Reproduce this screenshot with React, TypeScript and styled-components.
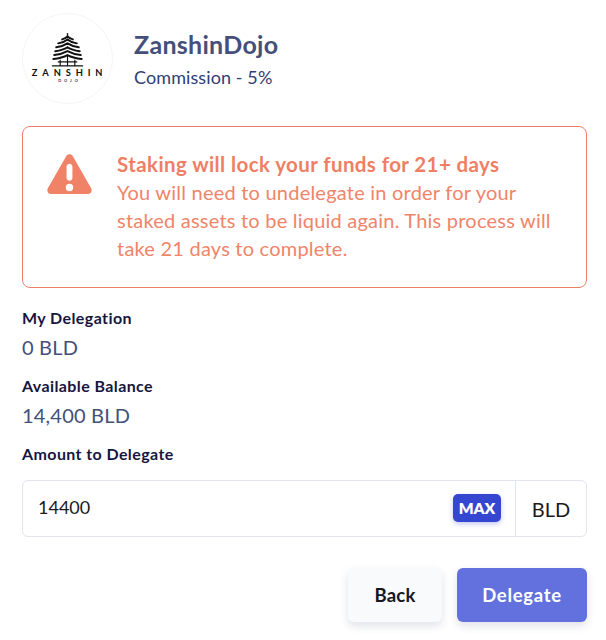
import React from "react";
import styled, { createGlobalStyle } from "styled-components";

const GlobalStyle = createGlobalStyle`
  body {
    margin: 0;
    background: #fff;
    font-family: "Lato", "Noto Sans", sans-serif;
  }
`;

const Page = styled.div`
  width: 606px;
  height: 640px;
  box-sizing: border-box;
  padding: 13px 19px 0 22px;
  overflow: hidden;
`;

const Header = styled.header`
  display: flex;
  align-items: center;
  gap: 21px;
  margin-bottom: 22px;
`;

const LogoCircle = styled.div`
  width: 91px;
  height: 91px;
  border-radius: 50%;
  border: 1px solid #f5f5f6;
  box-sizing: border-box;
  display: flex;
  align-items: center;
  justify-content: center;
`;

const TitleContainer = styled.div`
  display: flex;
  flex-direction: column;
  gap: 7px;
`;

const Title = styled.span`
  font-size: 25px;
  line-height: 30px;
  font-weight: 700;
  letter-spacing: 0.3px;
  color: #44507a;
`;

const Commission = styled.span`
  font-size: 18px;
  line-height: 22px;
  letter-spacing: 0.1px;
  color: #2f4073;
`;

const Alert = styled.section`
  display: flex;
  box-sizing: border-box;
  height: 162px;
  border: 1px solid #ee8068;
  border-radius: 8px;
  padding: 23px 20px 0 24px;
  gap: 25px;
  margin-bottom: 20px;
`;

const AlertIcon = styled.svg`
  width: 45px;
  height: 40px;
  margin-top: 4px;
  flex: none;
`;

const AlertBody = styled.div`
  color: #f08469;
  font-size: 20px;
  line-height: 28px;
  letter-spacing: 0.22px;
  font-weight: 400;
`;

const AlertTitle = styled.div`
  font-size: 20.5px;
  letter-spacing: 0.4px;
  font-weight: 700;
  color: #ef7f64;
`;

const Label = styled.div`
  font-size: 16px;
  line-height: 20px;
  letter-spacing: 0.4px;
  font-weight: 700;
  color: #16163f;
`;

const Value = styled.div`
  font-size: 20px;
  line-height: 24px;
  letter-spacing: 0.2px;
  color: #44507a;
  margin: 7px 0 17px;
`;

const InputGroup = styled.div`
  display: flex;
  height: 57px;
  box-sizing: border-box;
  margin-top: 16px;
  border: 1px solid #e2e4ee;
  border-radius: 6px;
`;

const InputField = styled.div`
  flex: 1;
  display: flex;
  align-items: center;
  justify-content: space-between;
  padding: 0 14px 1px 15px;
  font-size: 18px;
  line-height: 22px;
  color: #1a1a1a;
`;

const AmountText = styled.span`
  margin-bottom: 2px;
`;

const MaxButton = styled.button`
  width: 48px;
  height: 28px;
  padding: 0;
  border: none;
  border-radius: 5px;
  background: #3547d1;
  color: #fff;
  font: 800 15.5px "Lato", sans-serif;
  box-shadow: 0 2px 5px rgba(53, 71, 209, 0.3);
`;

const Unit = styled.div`
  width: 70px;
  border-left: 1px solid #e2e4ee;
  display: flex;
  align-items: center;
  justify-content: center;
  font-size: 20px;
  color: #1a1a1a;
`;

const Actions = styled.div`
  display: flex;
  justify-content: flex-end;
  gap: 15px;
  margin-top: 31px;
`;

const Button = styled.button<{ $primary?: boolean }>`
  height: 54px;
  width: ${({ $primary }) => ($primary ? "130px" : "94px")};
  border: none;
  border-radius: 6px;
  font: 700 18.5px "Lato", sans-serif;
  letter-spacing: ${({ $primary }) => ($primary ? "0.7px" : "0.2px")};
  background: ${({ $primary }) => ($primary ? "#6271dd" : "#f9fafc")};
  color: ${({ $primary }) => ($primary ? "#fff" : "#16161d")};
  box-shadow: 0 4px 8px rgba(40, 50, 90, 0.14);
`;

const Logo = () => (
  <svg width="91" height="91" viewBox="0 0 91 91">
    <g fill="none" stroke="#111" strokeLinecap="round">
      <path d="M45.5 20v3" strokeWidth="1.3" />
      <path d="M40 26q3.500-1 5.500-3q2 2 5.500 3" strokeWidth="2" />
      <path d="M36 30q6-1 9.500-4q3.500 3 9.500 4" strokeWidth="2" />
      <path d="M34 34q7-1 11.500-4q4.500 3 11.500 4" strokeWidth="2" />
      <path d="M33 38q8-1 12.500-4q4.500 3 12.500 4" strokeWidth="2" />
      <path d="M32 42q8-1 13.500-4q5.500 3 13.500 4" strokeWidth="2" />
      <path d="M31 46q9-1 14.500-4q5.500 3 14.500 4" strokeWidth="2" />
      <path d="M45.500 43v10M38 47v6M53 47v6M30 53h31M36 49h19" strokeWidth="1.2" />
    </g>
    <text x="9" y="63" fontFamily="Lato, sans-serif" fontSize="9.5" fontWeight="700" letterSpacing="5" fill="#111">ZANSHIN</text>
    <text x="36" y="70" fontFamily="Lato, sans-serif" fontSize="4" fontWeight="700" letterSpacing="3" fill="#333">DOJO</text>
  </svg>
);

export default function App(): React.ReactElement {
  return (
    <Page>
      <GlobalStyle />
      <Header>
        <LogoCircle>
          <Logo />
        </LogoCircle>
        <TitleContainer>
          <Title>ZanshinDojo</Title>
          <Commission>Commission - 5%</Commission>
        </TitleContainer>
      </Header>
      <Alert>
        <AlertIcon viewBox="0 0 46 41">
          <path
            fillRule="evenodd"
            fill="#ef8267"
            d="M19.6 2.200c1.500-2.700 5.300-2.700 6.800 0l18.800 33c1.500 2.600-.4 5.800-3.400 5.800H4.200c-3 0-4.900-3.200-3.400-5.800zM20 13v11.500c0 1.600 1.400 2.900 3 2.900s3-1.300 3-2.900V13c0-1.600-1.400-2.900-3-2.900s-3 1.300-3 2.900zm3 17.500a3.800 3.800 0 1 0 0 7.600 3.800 3.800 0 0 0 0-7.600z"
          />
        </AlertIcon>
        <AlertBody>
          <AlertTitle>Staking will lock your funds for 21+ days</AlertTitle>
          You will need to undelegate in order for your
          <br />
          staked assets to be liquid again. This process will
          <br />
          take 21 days to complete.
        </AlertBody>
      </Alert>
      <Label>My Delegation</Label>
      <Value>0 BLD</Value>
      <Label>Available Balance</Label>
      <Value>14,400 BLD</Value>
      <Label>Amount to Delegate</Label>
      <InputGroup>
        <InputField>
          <AmountText>14400</AmountText>
          <MaxButton>MAX</MaxButton>
        </InputField>
        <Unit>BLD</Unit>
      </InputGroup>
      <Actions>
        <Button>Back</Button>
        <Button $primary>Delegate</Button>
      </Actions>
    </Page>
  );
}
